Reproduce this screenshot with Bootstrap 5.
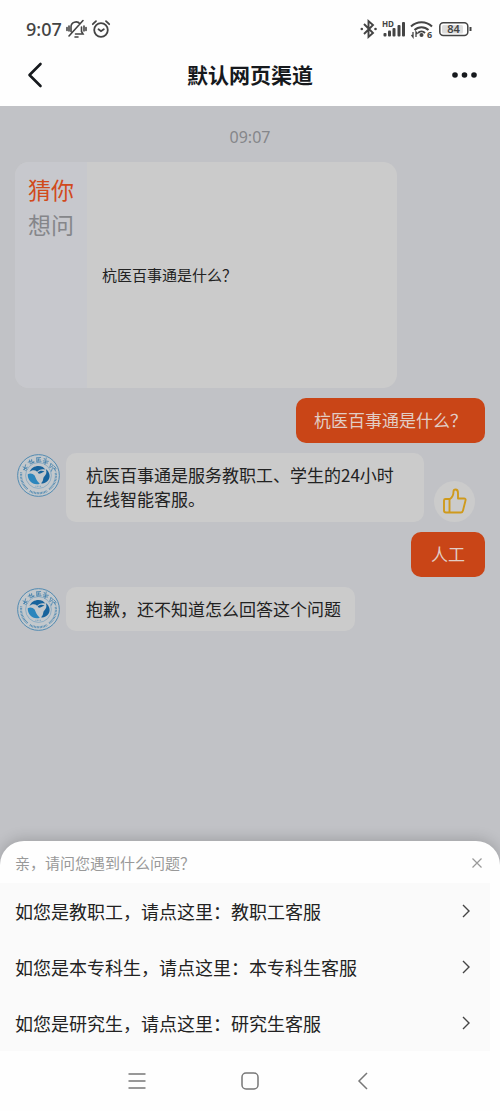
<!DOCTYPE html>
<html lang="zh-CN">
<head>
<meta charset="utf-8">
<meta name="viewport" content="width=device-width, initial-scale=1">
<title>默认网页渠道</title>
<link href="https://cdn.jsdelivr.net/npm/bootstrap@5.3.0/dist/css/bootstrap.min.css" rel="stylesheet">
<style>
  body { font-family: "Noto Sans CJK SC", sans-serif; color: #222; background: #fefefe; }
  .digits { font-family: "Noto Sans", "Noto Sans CJK SC", sans-serif; }
  .status-bar { height: 44px; padding: 14px 28px 0 26px; color: #444; }
  .status-time { font-size: 18px; line-height: 30px; font-weight: 500; }
  .title-bar { height: 62px; padding: 0 20px; color: #16191d; }
  .title-bar h1 { font-size: 21px; line-height: 32px; padding-bottom: 2px; }
  .plain-btn { display: flex; align-items: center; justify-content: center; padding: 0; border: 0; background: none; color: inherit; }
  .chat { background: #c1c2c6; padding: 19px 15px 50px; gap: 10px; }
  .chat-time { font-size: 16px; line-height: 24px; color: #85868a; margin-bottom: 3px; }
  .guess { width: 82%; max-width: 382px; min-height: 226px; border-radius: 14px; background: #cbcbcb; overflow: hidden; }
  .guess-side { width: 72px; padding: 10px 0 0 13px; background: #c7c8cd; font-size: 23px; line-height: 35px; color: #85868a; }
  .guess-side strong { color: #d14a1c; font-weight: 400; }
  .guess a { font-size: 15px; color: #222; text-decoration: none; padding-left: 15px; }
  .bubble { font-size: 17px; line-height: 24px; padding: 10px 14px 10px 20px; border-radius: 10px; background: #cbcbcb; }
  .bubble-two { flex: 0 1 358px; padding-bottom: 11px; }
  .bubble-me { min-width: 74px; background: #c94517; color: #e2cdc5; padding: 10px 18px 11px; text-align: center; }
  .avatar { width: 43px; height: 43px; margin: 1px 6px 0 2px; flex: none; }
  .thumb { width: 41px; height: 41px; border-radius: 50%; background: #cbcbcb; margin-left: 10px; flex: none; }
  .sheet { position: relative; margin-top: -24px; border-radius: 24px 24px 0 0; background: #fefefe; box-shadow: 0 -2px 14px rgba(0,0,0,.18); }
  .sheet-head { height: 42px; padding: 2px 16px 0 15px; font-size: 15px; color: #999; }
  .sheet-list { margin-right: 10px; background: #fafafa; }
  .sheet-list a { height: 56px; padding: 0 18px 0 15px; font-size: 18px; color: #222; text-decoration: none; }
  .nav-keys { height: 60px; gap: 87px; color: #777; background: #fefefe; }
  .nav-keys button { width: 26px; height: 26px; }
</style>
</head>
<body class="d-flex flex-column min-vh-100">

<svg width="0" height="0" class="position-absolute" aria-hidden="true">
  <defs>
    <symbol id="crest" viewBox="0 0 100 100">
      <circle cx="50" cy="50" r="48.500" fill="#c3c8cc" stroke="#4a86b0" stroke-width="2.200"/>
      <circle cx="50" cy="50" r="30" fill="none" stroke="#6f9dbd" stroke-width="1.500"/>
      <g fill="none" stroke="#3a7cab" stroke-width="1.800" stroke-linecap="round">
        <path d="M14 30l8 4M20 25l-3 12M15 36l9-5M23 36l-3 3"/>
        <path d="M29 14l2 9M26 19l8-3M34 13l1 7 4-2M33 22l7-3"/>
        <path d="M46 9l9-1M46 9v10l10-1M48 14h7M51 10l-2 7"/>
        <path d="M63 10l2 3M68 9l-1 5M61 16l12 1M67 16l-2 8M62 20l9 1"/>
        <path d="M79 22l-3 9M80 23l4 4-6 4M86 28l5 5M83 32l7 3M82 34l-2 6M87 35l3 5"/>
      </g>
      <g fill="none" stroke="#4a86b0" stroke-width="5" stroke-dasharray="1.800 1.600">
        <path d="M10 43A41 41 0 0 0 25 82"/><path d="M30 86A41 41 0 0 0 70 86"/><path d="M75 82A41 41 0 0 0 90 43"/>
      </g>
      <path fill="#17639c" d="M29 42C34 29 48 25 60 30L66 36C57 34 51 36 47 41C41 36 34 37 29 42Z"/>
      <path fill="#2c86bd" d="M25 47C30 44 37 45 41 50C44 56 45 62 53 69C38 74 24 62 25 47Z"/>
      <path fill="#17639c" d="M67 35C77 43 79 55 71 63C66 68 60 70 56 68C63 62 59 57 64 52C68 47 70 43 67 35Z"/>
      <path fill="#17639c" d="M48 43C53 38 59 38 64 41C58 42 56 46 51 46Z"/>
      <path stroke="#6f9dbd" stroke-width="2.500" stroke-dasharray="2 1.500" d="M43 75h14"/>
    </symbol>
  </defs>
</svg>

<header>
  <div class="status-bar digits d-flex align-items-center">
    <span class="status-time">9:07</span>
    <svg class="ms-1" width="21" height="20" viewBox="0 0 21 20" fill="none" stroke="#444" stroke-width="1.600" stroke-linecap="round" aria-label="静音">
      <path d="M5 12.500V8a5 5 0 0 1 9-3M15.500 8v4.500l1.500 2.500H9.500M17 1.500L3 17M1 8.500v3M3 7v5M20 8.500v3M18 7v5M9 18h3"/>
    </svg>
    <svg class="ms-1" width="20" height="20" viewBox="0 0 20 20" fill="none" stroke="#444" stroke-width="1.800" stroke-linecap="round" aria-label="闹钟">
      <circle cx="10" cy="11" r="6.800"/><path d="M1.800 5.200L5 2.200M18.200 5.200L15 2.200M7.500 10.200l2.500 2 2.800-2"/>
    </svg>
    <svg class="ms-auto" width="112" height="22" viewBox="0 0 112 22" fill="none" stroke="#444" aria-label="蓝牙、信号、无线网络、电量 84">
      <path stroke-width="1.900" d="M4 6l9 9-4.500 4V3L13 7l-9 9"/>
      <g fill="#444" stroke="none">
        <circle cx="1.800" cy="11" r="1.300"/><circle cx="15.500" cy="11" r="1.300"/>
        <text x="22" y="9" font-size="8" font-weight="700">HD</text>
        <rect x="23.500" y="15" width="3" height="3.500" rx="1"/><rect x="28" y="12.500" width="3" height="6" rx="1"/><rect x="32.500" y="10" width="3" height="8.500" rx="1"/><rect x="37.500" y="7" width="3" height="11.500" rx="1"/><rect x="42" y="4" width="3" height="14.500" rx="1"/>
        <circle cx="61.500" cy="17" r="2"/>
        <text x="67" y="19.500" font-size="9" font-weight="700">6</text>
      </g>
      <path stroke-width="2" d="M51 8.500a15 15 0 0 1 21 0M54.500 12a10 10 0 0 1 14 0M58 15a5 5 0 0 1 7 0"/>
      <path stroke-width="1.300" d="M53 14v5l-1.500-2M56 19v-5l1.500 2"/>
      <rect x="79.800" y="4.800" width="28" height="12.600" rx="3.500" stroke-width="1.500"/>
      <rect x="82" y="7" width="21" height="8.400" rx="1.500" fill="#ddd" stroke="none"/>
      <path stroke-width="2" d="M110.500 9v4"/>
      <text x="93.500" y="15" text-anchor="middle" font-size="11" font-weight="600" fill="#444" stroke="none">84</text>
    </svg>
  </div>
  <div class="title-bar d-flex align-items-center justify-content-between">
    <button class="plain-btn" type="button" aria-label="返回">
      <svg width="30" height="30" viewBox="0 0 30 30" fill="none" stroke="currentColor" stroke-width="2.600" stroke-linecap="round" stroke-linejoin="round"><path d="M20.500 4L9.500 15l11 11"/></svg>
    </button>
    <h1 class="m-0 fw-bold">默认网页渠道</h1>
    <button class="plain-btn" type="button" aria-label="更多">
      <svg width="30" height="30" viewBox="0 0 30 30" fill="currentColor"><circle cx="5" cy="15" r="2.800"/><circle cx="14.500" cy="15" r="2.800"/><circle cx="24" cy="15" r="2.800"/></svg>
    </button>
  </div>
</header>

<main class="chat flex-grow-1 d-flex flex-column">
  <div class="chat-time digits text-center">09:07</div>

  <section class="guess d-flex">
    <div class="guess-side"><strong>猜你</strong><br>想问</div>
    <div class="d-flex align-items-center"><a href="#ask">杭医百事通是什么？</a></div>
  </section>

  <div class="bubble bubble-me align-self-end">杭医百事通是什么？</div>

  <div class="d-flex">
    <svg class="avatar" aria-hidden="true"><use href="#crest"/></svg>
    <div class="bubble bubble-two">杭医百事通是服务教职工、学生的24小时<br>在线智能客服。</div>
    <button class="plain-btn thumb align-self-end" type="button" aria-label="点赞">
      <svg width="25" height="27" viewBox="0 0 25 27" fill="none" stroke="#cf9a1c" stroke-width="1.900" stroke-linejoin="round"><path d="M2 12.500q0-1.500 1.500-1.500H8q3.500-2.500 3.500-7.500Q11.500 1.500 13.500 1.500q2.500 0 2.500 3.500v5.500h6q2 0 1.500 2l-2.500 10Q20.500 24.500 19 24.500H4Q2 24.500 2 22.500ZM7.500 11v13.500"/></svg>
    </button>
  </div>

  <div class="bubble bubble-me align-self-end">人工</div>

  <div class="d-flex">
    <svg class="avatar" aria-hidden="true"><use href="#crest"/></svg>
    <div class="bubble">抱歉，还不知道怎么回答这个问题</div>
  </div>
</main>

<section class="sheet" aria-labelledby="sheet-title">
  <div class="sheet-head d-flex align-items-center justify-content-between">
    <span id="sheet-title">亲，请问您遇到什么问题？</span>
    <button class="plain-btn" type="button" aria-label="关闭">
      <svg width="14" height="14" viewBox="0 0 14 14" fill="none" stroke="#999" stroke-width="1.200"><path d="M2.500 2.500l9 9M11.500 2.500l-9 9"/></svg>
    </button>
  </div>
  <nav class="sheet-list">
    <a class="d-flex align-items-center justify-content-between" href="#staff">如您是教职工，请点这里：教职工客服
      <svg width="12" height="16" viewBox="0 0 12 16" fill="none" stroke="#444" stroke-width="1.400"><path d="M3 2l6 6-6 6"/></svg></a>
    <a class="d-flex align-items-center justify-content-between" href="#undergraduate">如您是本专科生，请点这里：本专科生客服
      <svg width="12" height="16" viewBox="0 0 12 16" fill="none" stroke="#444" stroke-width="1.400"><path d="M3 2l6 6-6 6"/></svg></a>
    <a class="d-flex align-items-center justify-content-between" href="#graduate">如您是研究生，请点这里：研究生客服
      <svg width="12" height="16" viewBox="0 0 12 16" fill="none" stroke="#444" stroke-width="1.400"><path d="M3 2l6 6-6 6"/></svg></a>
  </nav>
</section>

<footer class="nav-keys position-relative d-flex align-items-center justify-content-center">
  <button class="plain-btn" type="button" aria-label="菜单"><svg width="20" height="20" viewBox="0 0 20 20" stroke="currentColor" stroke-width="1.500"><path d="M1.500 3h17M1.500 10h17M1.500 17h17"/></svg></button>
  <button class="plain-btn" type="button" aria-label="主屏幕"><svg width="20" height="20" viewBox="0 0 20 20" fill="none" stroke="currentColor" stroke-width="1.500"><rect x="2" y="2" width="16" height="16" rx="4"/></svg></button>
  <button class="plain-btn" type="button" aria-label="后退"><svg width="20" height="20" viewBox="0 0 20 20" fill="none" stroke="currentColor" stroke-width="1.500"><path d="M14 2l-8 8 8 8"/></svg></button>
</footer>

<script src="https://cdn.jsdelivr.net/npm/bootstrap@5.3.0/dist/js/bootstrap.bundle.min.js"></script>
</body>
</html>
